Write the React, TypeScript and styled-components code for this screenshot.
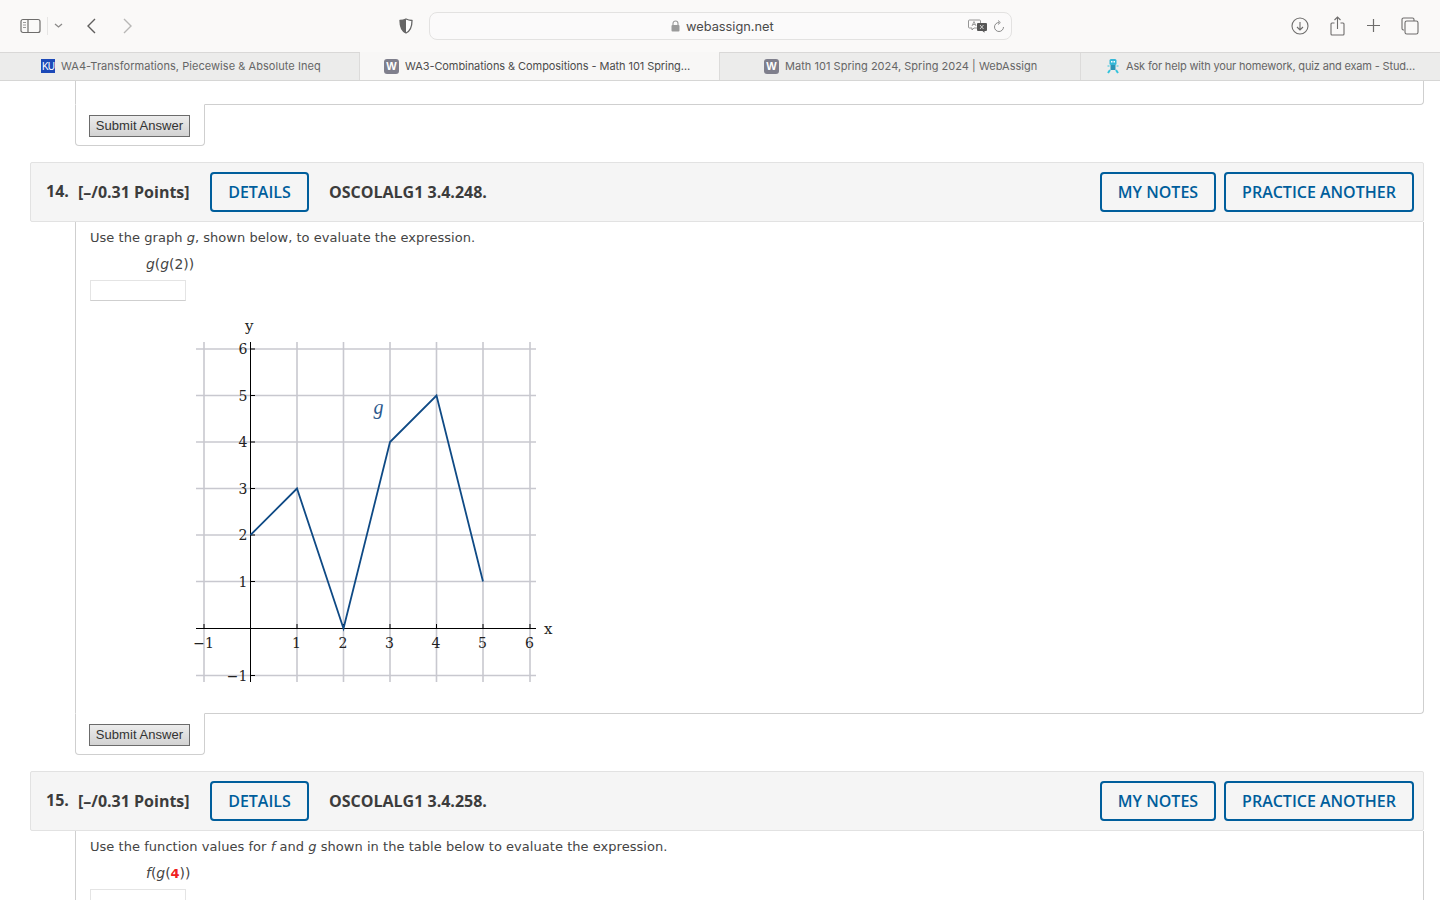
import React from "react";
import styled, { createGlobalStyle } from "styled-components";

const Global = createGlobalStyle`
  html, body { margin: 0; padding: 0; background: #fff; }
  #root { height: 900px; overflow: hidden; }
  * { box-sizing: border-box; }
`;

const Page = styled.div`
  width: 1440px;
  height: 900px;
  overflow: hidden;
  display: flex;
  flex-direction: column;
`;

const Toolbar = styled.div`
  height: 52px;
  background: #faf9f8;
  display: flex;
  align-items: center;
  padding: 0 18px 1px 20px;
  color: #6e6d6c;
  flex: none;
`;
const ToolIcon = styled.svg<{ $gap?: number }>`
  flex: none;
  display: block;
  margin-left: ${(p) => p.$gap ?? 0}px;
`;
const Divider = styled.div`
  width: 1px;
  height: 18px;
  background: #e6e5e4;
  margin-left: 6px;
`;
const AddressBar = styled.div`
  width: 583px;
  height: 28px;
  margin-left: 16px;
  border: 1px solid #e3e2e1;
  border-radius: 8px;
  background: #fbfafa;
  display: flex;
  align-items: center;
  padding: 1px 5px 0 241px;
  flex: none;
`;
const Host = styled.span`
  font: 12.8px "Inter", "Liberation Sans", sans-serif;
  color: #4a4a4a;
  margin-left: 6px;
  width: 282px;
`;
const TabBar = styled.div`
  height: 29px;
  display: flex;
  background: #ececeb;
  border-top: 1px solid #d9d8d7;
  border-bottom: 1px solid #d6d6d5;
  flex: none;
`;
const Tab = styled.div<{ $w: number; $active?: boolean; $pad: number; $track: number }>`
  width: ${(p) => p.$w}px;
  display: flex;
  align-items: center;
  gap: 6px;
  padding-left: ${(p) => p.$pad}px;
  padding-bottom: ${(p) => (p.$active ? "0" : "1px")};
  background: ${(p) => (p.$active ? "#f8f7f6" : "transparent")};
  border-right: 1px solid #dcdbda;
  margin-top: ${(p) => (p.$active ? "-1px" : "0")};
  font: 11px "Inter", "Liberation Sans", sans-serif;
  letter-spacing: ${(p) => p.$track}px;
  color: ${(p) => (p.$active ? "#4c4c4c" : "#666")};
  white-space: nowrap;
  &:last-child { border-right: 0; }
`;
const KU = styled.span`
  width: 14px;
  height: 14px;
  background: #1c49b8;
  color: #fff;
  font: 10px "Liberation Sans", sans-serif;
  letter-spacing: -1px;
  display: flex;
  align-items: center;
  justify-content: center;
  flex: none;
`;
const WIcon = styled.span`
  width: 15px;
  height: 15px;
  border-radius: 3px;
  background: #7f7f8c;
  color: #fff;
  font: bold 11px "Liberation Sans", sans-serif;
  letter-spacing: 0;
  display: flex;
  align-items: center;
  justify-content: center;
  flex: none;
`;

const Content = styled.div`
  flex: 1;
  background: #fff;
  overflow: hidden;
`;
const Panel = styled.div<{ $h: number; $open?: boolean }>`
  margin-left: 75px;
  width: 1349px;
  height: ${(p) => p.$h}px;
  border: 1px solid #cfcfcf;
  border-top: 0;
  border-bottom: ${(p) => (p.$open ? "0" : "1px solid #cfcfcf")};
  border-bottom-right-radius: 4px;
  padding: 0 14px;
`;
const SubmitTab = styled.div`
  margin-left: 75px;
  width: 130px;
  height: 42px;
  margin-top: -1px;
  position: relative;
  background: #fff;
  border: 1px solid #cfcfcf;
  border-top: 1px solid #fff;
  border-radius: 0 0 4px 4px;
  padding: 10px 0 0 13px;
`;
const SubmitButton = styled.button`
  display: block;
  width: 101px;
  height: 22px;
  padding: 0 0 1px;
  border: 1px solid #6b6b6b;
  background: linear-gradient(#ececec, #d2d2d2);
  color: #333;
  font: 13px "Liberation Sans", Arial, sans-serif;
  letter-spacing: 0.05px;
`;
const QuestionHeader = styled.div`
  margin: 16px 0 0 30px;
  width: 1394px;
  height: 60px;
  border: 1px solid #e2e2e2;
  border-radius: 2px;
  background: #f5f5f5;
  display: flex;
  align-items: center;
  padding: 0 9px 0 15px;
  font: bold 16px "Open Sans", sans-serif;
  color: #3c3c3c;
`;
const Num = styled.span`
  width: 32px;
  margin-top: -2px;
  flex: none;
`;
const Points = styled.span`
  width: 132px;
  flex: none;
`;
const Ref = styled.span`
  margin-left: 20px;
  flex: 1;
`;
const OutlineButton = styled.button<{ $w: number; $gap?: number }>`
  width: ${(p) => p.$w}px;
  margin-left: ${(p) => p.$gap ?? 0}px;
  height: 40px;
  padding: 0;
  background: transparent;
  border: 2px solid #005e9c;
  border-radius: 4px;
  color: #005e9c;
  font: 600 16px "Open Sans", sans-serif;
  flex: none;
`;
const Prompt = styled.p`
  margin: 0;
  padding-top: 8px;
  height: 30px;
  font: 13px/16px "DejaVu Sans", Verdana, sans-serif;
  color: #444;
  letter-spacing: 0.04px;
`;
const Expression = styled.p`
  margin: 0 0 0 56px;
  height: 28px;
  padding-top: 3px;
  font: 13.9px/18px "DejaVu Sans", Verdana, sans-serif;
  color: #444;
`;
const Red = styled.b`
  color: #f02020;
  font-size: 13px;
`;
const AnswerInput = styled.div`
  width: 96px;
  height: 21px;
  background: #fff;
  border: 1px solid #e4e4e4;
  border-bottom-color: #cfcfcf;
`;
const GraphSvg = styled.svg`
  display: block;
  margin: 14px 0 0 100px;
`;

const grid = "#c8c8cf";
const X = [204, 250.5, 297, 343.5, 390, 436.5, 483, 530];
const Y = [349, 395.5, 442, 488.5, 535, 581.5, 628.5, 675.5];
const ox = 190;
const oy = 315;

const Graph = () => (
  <GraphSvg width={370} height={375} viewBox={`${ox} ${oy} 370 375`} fontFamily="'DejaVu Serif', serif" fontSize={14} fill="#222">
    {X.map((x) => (
      <line key={x} x1={x} x2={x} y1={342} y2={682} stroke={grid} strokeWidth={x === 250.5 ? 0 : 1.6} />
    ))}
    {Y.map((y) => (
      <line key={y} x1={196} x2={536} y1={y} y2={y} stroke={grid} strokeWidth={y === 628.5 ? 0 : 1.6} />
    ))}
    <line x1={250.5} x2={250.5} y1={342} y2={682} stroke="#000" strokeWidth={1} />
    <line x1={196} x2={536} y1={628.5} y2={628.5} stroke="#000" strokeWidth={1} />
    {X.filter((x) => x !== 250.5).map((x) => (
      <line key={x} x1={x} x2={x} y1={624} y2={629} stroke="#000" strokeWidth={1} />
    ))}
    {Y.filter((y) => y !== 628.5).map((y) => (
      <line key={y} x1={251} x2={255} y1={y} y2={y} stroke="#000" strokeWidth={1} />
    ))}
    {["6", "5", "4", "3", "2", "1"].map((t, i) => (
      <text key={t} x={247.5} y={Y[i] + 5} textAnchor="end">{t}</text>
    ))}
    <text x={247.5} y={681} textAnchor="end">−1</text>
    <text x={203.5} y={648} textAnchor="middle">−1</text>
    {["1", "2", "3", "4", "5", "6"].map((t, i) => (
      <text key={t} x={X[i + 2] - 0.5} y={648} textAnchor="middle">{t}</text>
    ))}
    <text x={544} y={634} fontSize={15}>x</text>
    <text x={245} y={331} fontSize={15}>y</text>
    <text x={373.5} y={414} fontSize={20} fontStyle="italic" fontFamily="'Liberation Serif', serif" fill="#2d5a8e">g</text>
    <polyline
      points="250.5,535 297,488.5 343.5,628.5 390,442 436.5,395.5 483,581.5"
      fill="none"
      stroke="#0f4a85"
      strokeWidth={1.8}
      strokeLinejoin="miter"
    />
  </GraphSvg>
);

const I = styled.i`
  font-style: italic;
`;

const Header = ({ n, code }: { n: number; code: string }) => (
  <QuestionHeader>
    <Num>{n}.</Num>
    <Points>[–/0.31 Points]</Points>
    <OutlineButton $w={99}>DETAILS</OutlineButton>
    <Ref>{code}</Ref>
    <OutlineButton $w={116}>MY NOTES</OutlineButton>
    <OutlineButton $w={190} $gap={8}>PRACTICE ANOTHER</OutlineButton>
  </QuestionHeader>
);

const Submit = () => (
  <SubmitTab>
    <SubmitButton>Submit Answer</SubmitButton>
  </SubmitTab>
);

const Robot = () => (
  <ToolIcon width={14} height={16} viewBox="0 0 14 16">
    <rect x="3.5" y="1" width="7" height="6" rx="1.5" fill="#35b8d8" />
    <rect x="5" y="3" width="1.5" height="1.5" fill="#fff" />
    <rect x="7.5" y="3" width="1.5" height="1.5" fill="#fff" />
    <rect x="4.5" y="7" width="5" height="5" fill="#2a93b5" />
    <path d="M4 12 2 15M10 12l2 3" stroke="#35c4dc" strokeWidth="2" fill="none" />
    <path d="M3.5 8H1.5M10.5 8h2" stroke="#35c4dc" strokeWidth="1" />
  </ToolIcon>
);

export default function App() {
  return (
    <Page>
      <Global />
      <Toolbar>
        <ToolIcon width={21} height={16} viewBox="0 0 21 16" fill="none" stroke="#6e6d6c" strokeWidth="1.2">
          <rect x="1" y="1.5" width="19" height="13" rx="2" />
          <path d="M8 1.5v13" />
          <path d="M3 4.5h3M3 7h3M3 9.5h3" strokeWidth="1" stroke="#9a9998" />
        </ToolIcon>
        <Divider />
        <ToolIcon $gap={6} width={9} height={6} viewBox="0 0 9 6" fill="none" stroke="#8b8a89" strokeWidth="1.3">
          <path d="M1 1l3.5 3L8 1" />
        </ToolIcon>
        <ToolIcon $gap={23} width={11} height={16} viewBox="0 0 11 16" fill="none" stroke="#5f5e5d" strokeWidth="1.4">
          <path d="M9 1L2 8l7 7" />
        </ToolIcon>
        <ToolIcon $gap={25} width={11} height={16} viewBox="0 0 11 16" fill="none" stroke="#b8b7b6" strokeWidth="1.4">
          <path d="M2 1l7 7-7 7" />
        </ToolIcon>
        <ToolIcon $gap={266} width={14} height={16} viewBox="0 0 14 16">
          <path d="M7 1C5 2 3 2.4 1 2.5c0 6 1.5 10.5 6 12.5 4.5-2 6-6.5 6-12.5C11 2.4 9 2 7 1z" fill="#fff" stroke="#666" strokeWidth="1.3" />
          <path d="M7 1C5 2 3 2.4 1 2.5c0 6 1.5 10.5 6 12.5z" fill="#666" />
        </ToolIcon>
        <AddressBar>
          <ToolIcon width={9} height={12} viewBox="0 0 9 12">
            <path d="M2 5V3.5a2.5 2.5 0 0 1 5 0V5" fill="none" stroke="#9a9a9a" strokeWidth="1.1" />
            <rect x="0.5" y="5" width="8" height="6.5" rx="1" fill="#9a9a9a" />
          </ToolIcon>
          <Host>webassign.net</Host>
          <ToolIcon width={20} height={14} viewBox="0 0 20 14">
            <path d="M1.5 1h10a1 1 0 0 1 1 1v6a1 1 0 0 1-1 1H6l-2 2V9H1.5a1 1 0 0 1-1-1V2a1 1 0 0 1 1-1z" fill="#fbfafa" stroke="#8a8a8a" strokeWidth="0.9" />
            <path d="M4 7l2-4.5L8 7M4.8 5.5h2.4" fill="none" stroke="#8a8a8a" strokeWidth="0.8" />
            <path d="M10 4h8a1 1 0 0 1 1 1v6a1 1 0 0 1-1 1h-1.5v1.8L14.5 12H10a1 1 0 0 1-1-1V5a1 1 0 0 1 1-1z" fill="#555" />
            <path d="M12 6l3.5 4M15.5 6L12 10" stroke="#ddd" strokeWidth="0.9" />
          </ToolIcon>
          <ToolIcon $gap={5} width={12} height={13} viewBox="0 0 12 13" fill="none" stroke="#8a8a8a" strokeWidth="1">
            <path d="M6 2.5a4.5 4.5 0 1 0 4.5 4.5" />
            <path d="M5 0.5l2.3 2-2.3 2" />
          </ToolIcon>
        </AddressBar>
        <ToolIcon $gap={279} width={18} height={18} viewBox="0 0 18 18" fill="none" stroke="#6e6d6c" strokeWidth="1.1">
          <circle cx="9" cy="9" r="8" />
          <path d="M9 5v8M6 10l3 3 3-3" />
        </ToolIcon>
        <ToolIcon $gap={21} width={15} height={20} viewBox="0 0 15 20" fill="none" stroke="#6e6d6c" strokeWidth="1.1">
          <path d="M4.5 7H2a1 1 0 0 0-1 1v10a1 1 0 0 0 1 1h11a1 1 0 0 0 1-1V8a1 1 0 0 0-1-1h-2.5" />
          <path d="M7.5 13V1M4.5 4l3-3 3 3" />
        </ToolIcon>
        <ToolIcon $gap={22} width={13} height={13} viewBox="0 0 13 13" fill="none" stroke="#6e6d6c" strokeWidth="1.2">
          <path d="M6.5 0v13M0 6.5h13" />
        </ToolIcon>
        <ToolIcon $gap={21} width={18} height={18} viewBox="0 0 18 18" fill="none" stroke="#6e6d6c" strokeWidth="1.1">
          <path d="M3 13H2.5A1.5 1.5 0 0 1 1 11.5v-9A1.5 1.5 0 0 1 2.5 1h9A1.5 1.5 0 0 1 13 2.5V4" />
          <rect x="4" y="4" width="13" height="13" rx="1.8" />
        </ToolIcon>
      </Toolbar>
      <TabBar>
        <Tab $w={360} $pad={41} $track={0.05}><KU>KU</KU>WA4-Transformations, Piecewise &amp; Absolute Ineq</Tab>
        <Tab $w={360} $active $pad={24} $track={-0.07}><WIcon>W</WIcon>WA3-Combinations &amp; Compositions - Math 101 Spring…</Tab>
        <Tab $w={361} $pad={44} $track={0.03}><WIcon>W</WIcon>Math 101 Spring 2024, Spring 2024 | WebAssign</Tab>
        <Tab $w={359} $pad={25} $track={-0.16}><Robot />Ask for help with your homework, quiz and exam - Stud…</Tab>
      </TabBar>
      <Content>
        <Panel $h={24} />
        <Submit />
        <Header n={14} code="OSCOLALG1 3.4.248." />
        <Panel $h={492}>
          <Prompt>Use the graph <I>g</I>, shown below, to evaluate the expression.</Prompt>
          <Expression><I>g</I>(<I>g</I>(2))</Expression>
          <AnswerInput />
          <Graph />
        </Panel>
        <Submit />
        <Header n={15} code="OSCOLALG1 3.4.258." />
        <Panel $h={120} $open>
          <Prompt>Use the function values for <I>f</I> and <I>g</I> shown in the table below to evaluate the expression.</Prompt>
          <Expression><I>f</I>(<I>g</I>(<Red>4</Red>))</Expression>
          <AnswerInput />
        </Panel>
      </Content>
    </Page>
  );
}
